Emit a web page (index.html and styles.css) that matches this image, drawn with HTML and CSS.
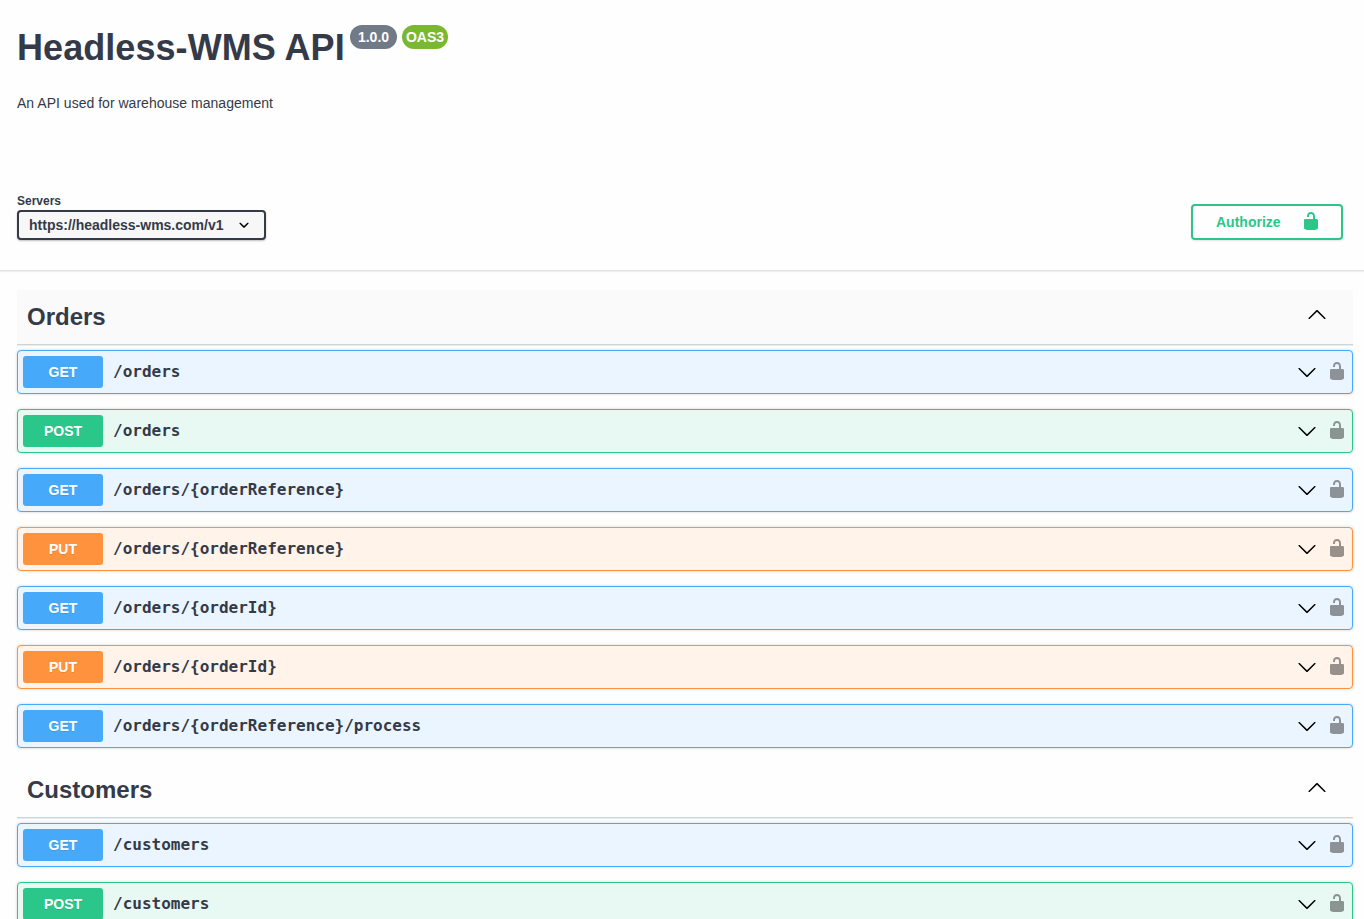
FILE: index.html
```html
<!DOCTYPE html>
<html lang="en">
<head>
<meta charset="utf-8">
<title>Headless-WMS API</title>
<link rel="stylesheet" href="styles.css">
</head>
<body>
<svg class="defs" aria-hidden="true">
  <symbol id="unlocked" viewBox="0 0 20 20"><path d="M15.8 8H14V5.6C14 2.703 12.665 1 10 1 7.334 1 6 2.703 6 5.6V6h2v-.801C8 3.754 8.797 3 10 3c1.203 0 2 .754 2 2.199V8H4c-.553 0-1 .646-1 1.199V17c0 .549.428 1.139.951 1.307l1.197.387C5.672 18.861 6.55 19 7.1 19h5.8c.549 0 1.428-.139 1.951-.307l1.196-.387c.524-.167.953-.757.953-1.306V9.199C17 8.646 16.352 8 15.8 8z"/></symbol>
  <symbol id="arrow-down" viewBox="0 0 20 20"><path d="M17.418 6.109c.272-.268.709-.268.979 0s.271.701 0 .969l-7.908 7.83c-.27.268-.707.268-.979 0l-7.908-7.83c-.27-.268-.27-.701 0-.969.271-.268.709-.268.979 0L10 13.25l7.418-7.141z"/></symbol>
  <symbol id="arrow-up" viewBox="0 0 20 20"><path d="M17.418 14.908c.272.268.709.268.979 0s.271-.701 0-.969l-7.908-7.83c-.27-.268-.707-.268-.979 0l-7.908 7.83c-.27.268-.27.701 0 .969.271.268.709.268.979 0L10 7.767l7.418 7.141z"/></symbol>
  <symbol id="arrow-small" viewBox="0 0 20 20"><path d="M13.418 7.859c.271-.268.709-.268.978 0 .27.268.272.701 0 .969l-3.908 3.83c-.27.268-.707.268-.979 0l-3.908-3.83c-.27-.267-.27-.701 0-.969.271-.268.709-.268.978 0L10 11l3.418-3.141z"/></symbol>
</svg>
<header class="info">
  <div class="title-row">
    <h1 class="title">Headless-WMS API</h1>
    <span class="badge">1.0.0</span>
    <span class="badge badge-oas">OAS3</span>
  </div>
  <p class="description">An API used for warehouse management</p>
</header>
<section class="scheme">
  <div class="servers">
    <span class="servers-label">Servers</span>
    <button class="server-select"><span>https://headless-wms.com/v1</span><svg class="icon"><use href="#arrow-small"/></svg></button>
  </div>
  <button class="authorize"><span>Authorize</span><svg class="icon"><use href="#unlocked"/></svg></button>
</section>
<main class="tags">
  <section class="tag">
    <h2 class="tag-head hovered"><span>Orders</span><svg class="icon"><use href="#arrow-up"/></svg></h2>
    <div class="op get"><span class="method">GET</span><span class="path">/orders</span><svg class="icon"><use href="#arrow-down"/></svg><svg class="icon lock"><use href="#unlocked"/></svg></div>
    <div class="op post"><span class="method">POST</span><span class="path">/orders</span><svg class="icon"><use href="#arrow-down"/></svg><svg class="icon lock"><use href="#unlocked"/></svg></div>
    <div class="op get"><span class="method">GET</span><span class="path">/orders/{orderReference}</span><svg class="icon"><use href="#arrow-down"/></svg><svg class="icon lock"><use href="#unlocked"/></svg></div>
    <div class="op put"><span class="method">PUT</span><span class="path">/orders/{orderReference}</span><svg class="icon"><use href="#arrow-down"/></svg><svg class="icon lock"><use href="#unlocked"/></svg></div>
    <div class="op get"><span class="method">GET</span><span class="path">/orders/{orderId}</span><svg class="icon"><use href="#arrow-down"/></svg><svg class="icon lock"><use href="#unlocked"/></svg></div>
    <div class="op put"><span class="method">PUT</span><span class="path">/orders/{orderId}</span><svg class="icon"><use href="#arrow-down"/></svg><svg class="icon lock"><use href="#unlocked"/></svg></div>
    <div class="op get"><span class="method">GET</span><span class="path">/orders/{orderReference}/process</span><svg class="icon"><use href="#arrow-down"/></svg><svg class="icon lock"><use href="#unlocked"/></svg></div>
  </section>
  <section class="tag">
    <h2 class="tag-head"><span>Customers</span><svg class="icon"><use href="#arrow-up"/></svg></h2>
    <div class="op get"><span class="method">GET</span><span class="path">/customers</span><svg class="icon"><use href="#arrow-down"/></svg><svg class="icon lock"><use href="#unlocked"/></svg></div>
    <div class="op post"><span class="method">POST</span><span class="path">/customers</span><svg class="icon"><use href="#arrow-down"/></svg><svg class="icon lock"><use href="#unlocked"/></svg></div>
  </section>
</main>
</body>
</html>
```
FILE: styles.css
```css
* { box-sizing: border-box; }
body {
  margin: 0;
  height: 100vh;
  overflow: hidden;
  background: #fefefe;
  color: #343a48;
  font-family: "Liberation Sans", Arial, sans-serif;
}
.defs { display: none; }
.icon { width: 20px; height: 20px; flex: none; display: block; }

.info { height: 176px; padding: 25px 17px 0; }
.title-row { display: flex; align-items: flex-start; }
.title { margin: 0; padding-top: 2px; width: 333px; font-size: 36px; line-height: 41px; white-space: nowrap; letter-spacing: 0.06px; }
.badge {
  height: 24px;
  width: 47px;
  margin-right: 5px;
  border-radius: 12px;
  background: #717a87;
  color: #fff;
  font-size: 14px;
  font-weight: 700;
  line-height: 24px;
  text-align: center;
}
.badge-oas { width: 46px; background: #7ab82f; }
.description { margin: 27px 0 0; font-size: 14px; line-height: 16px; letter-spacing: 0.02px; }

.scheme {
  display: flex;
  justify-content: space-between;
  align-items: flex-start;
  height: 95px;
  padding: 18px 21px 0 17px;
  border-bottom: 1px solid #e3e3e3;
  box-shadow: 0 1px 1px rgba(0, 0, 0, 0.06);
}
.servers { display: flex; flex-direction: column; }
.servers-label { font-size: 12px; font-weight: 700; line-height: 14px; padding-bottom: 2px; }
.server-select {
  display: flex;
  align-items: center;
  justify-content: space-between;
  width: 249px;
  height: 30px;
  padding: 0 10px;
  border: 2px solid #343a48;
  border-radius: 4px;
  background: #f7f7f7;
  box-shadow: 0 1px 2px rgba(0, 0, 0, 0.25);
  color: inherit;
  font: 700 14px "Liberation Sans", Arial, sans-serif;
}
.authorize {
  display: flex;
  align-items: center;
  justify-content: space-between;
  width: 152px;
  height: 36px;
  margin-top: 10px;
  padding: 0 20px 0 23px;
  border: 2px solid #2bc68a;
  border-radius: 4px;
  background: transparent;
  box-shadow: 0 1px 2px rgba(0, 0, 0, 0.1);
  color: #2bc68a;
  fill: #2bc68a;
  font: 700 14px "Liberation Sans", Arial, sans-serif;
}
.authorize .icon { margin-bottom: 2px; }

.tags { padding: 19px 11px 0 17px; }
.tag-head {
  display: flex;
  align-items: center;
  justify-content: space-between;
  height: 55px;
  margin: 0 0 5px;
  padding: 0 26px 0 10px;
  border-bottom: 1px solid #d2d3d5;
  box-shadow: 0 1px 0 rgba(0, 0, 0, 0.07);
  font-size: 24px;
  line-height: 28px;
}
.tag-head .icon { margin-bottom: 6px; }
.hovered { background: #fafafa; }
.op {
  display: flex;
  align-items: center;
  height: 44px;
  margin-bottom: 15px;
  padding: 0 5px;
  border: 1px solid;
  border-radius: 4px;
  box-shadow: 0 0 3px rgba(0, 0, 0, 0.19);
}
.method {
  width: 80px;
  height: 32px;
  border-radius: 3px;
  color: #fff;
  font-size: 14px;
  font-weight: 700;
  line-height: 32px;
  text-align: center;
  text-shadow: 0 1px 0 rgba(0, 0, 0, 0.1);
}
.path { flex: 1; padding-left: 10px; font: 700 16px/20px "DejaVu Sans Mono", monospace; }
.lock { margin: 0 0 2px 10px; fill: #000; opacity: 0.4; }
.get { border-color: #47a9f9; background: #ebf5ff; }
.get .method { background: #47a9f9; }
.post { border-color: #2bc68a; background: #e8f9f3; }
.post .method { background: #2bc68a; }
.put { border-color: #ff923d; background: #fff3ea; }
.put .method { background: #ff923d; }
```
